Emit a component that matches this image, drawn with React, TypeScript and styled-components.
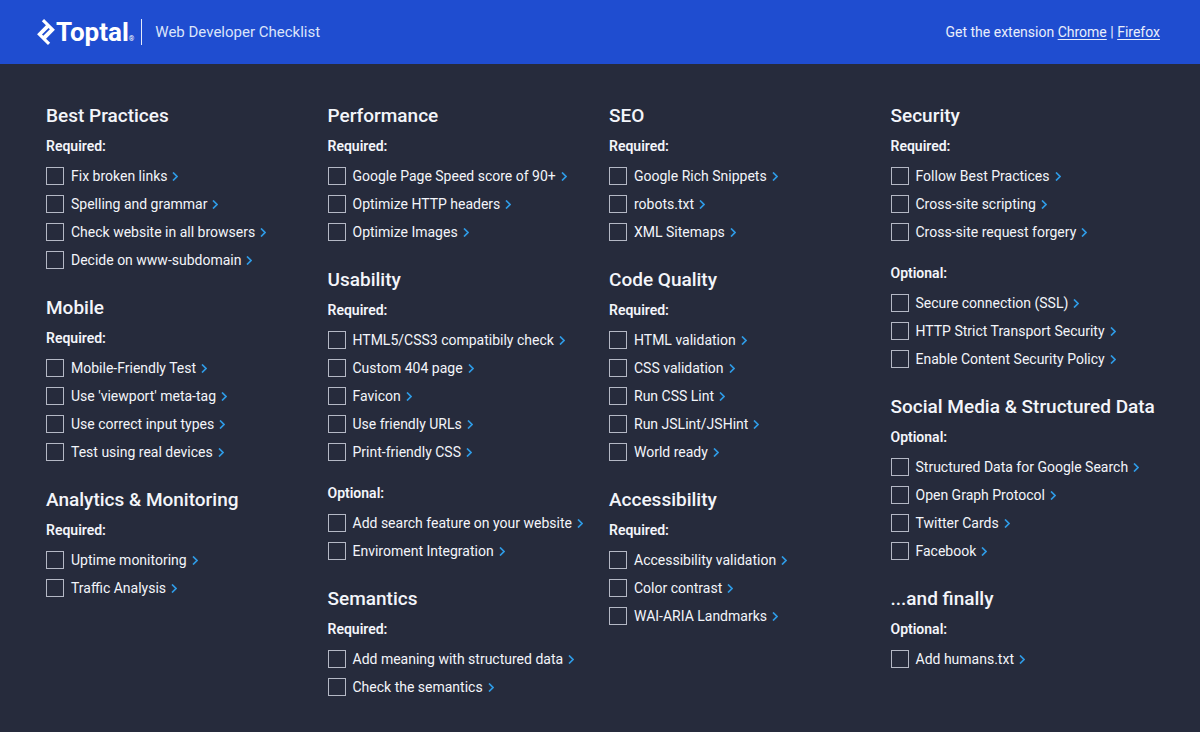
import React from "react";
import styled, { createGlobalStyle } from "styled-components";
import { SiToptal } from "react-icons/si";

const GlobalStyle = createGlobalStyle`
  *, *::before, *::after { box-sizing: border-box; }
  body {
    margin: 0;
    background: #262b3c;
    color: #f3f5fa;
    font-family: Roboto, "Liberation Sans", sans-serif;
    font-size: 14px;
  }
`;

const Header = styled.header`
  display: flex;
  align-items: center;
  height: 64px;
  padding: 0 40px 0 33px;
  background: #1f4dd0;
`;

const Brand = styled.a`
  display: flex;
  align-items: center;
  height: 26px;
  padding-right: 7px;
  border-right: 1px solid #e4eafa;
  color: #ffffff;
  text-decoration: none;
`;

const BrandName = styled.span`
  margin-left: -3px;
  font-size: 26px;
  font-weight: 700;
  line-height: 26px;
`;

const Registered = styled.span`
  align-self: flex-end;
  font-size: 7px;
  line-height: 12px;
`;

const Title = styled.h1`
  margin: 0 auto 0 13px;
  font-size: 15px;
  font-weight: 400;
  color: #dbe4fa;
`;

const Extension = styled.p`
  margin: 0;
  color: #e9eefb;
`;

const ExtensionLink = styled.a`
  color: inherit;
  text-underline-offset: 2px;
`;

const Board = styled.main`
  display: grid;
  grid-template-columns: repeat(4, minmax(0, 1fr));
  padding: 38px 28px 30px 46px;
`;

const Section = styled.section`
  margin-bottom: 20px;
`;

const Heading = styled.h2`
  margin: 0;
  font-size: 19px;
  font-weight: 500;
  line-height: 28px;
  white-space: nowrap;
`;

const Group = styled.fieldset`
  min-width: 0;
  margin: 0;
  padding: 0;
  border: 0;

  & + & { margin-top: 11px; }
`;

const Legend = styled.legend`
  padding: 0;
  font-size: 14px;
  font-weight: 600;
  line-height: 32px;
`;

const Items = styled.ul`
  margin: 0;
  padding: 0;
  list-style: none;
`;

const Item = styled.li`
  display: flex;
  align-items: center;
  height: 28px;
  white-space: nowrap;
`;

const Label = styled.label`
  display: flex;
  align-items: center;
  gap: 7px;
`;

const Box = styled.input`
  appearance: none;
  width: 18px;
  height: 18px;
  margin: 0;
  border: 1px solid #b4b8c5;

  &:checked { background: #2f9be6; }
`;

const More = styled.a`
  display: flex;
  padding: 4px 5px;
  color: #2f9be6;
`;

type GroupData = { kind: "Required" | "Optional"; items: string[] };
type SectionData = { title: string; groups: GroupData[] };

const required = (...items: string[]): GroupData => ({ kind: "Required", items });
const optional = (...items: string[]): GroupData => ({ kind: "Optional", items });

const columns: SectionData[][] = [
  [
    { title: "Best Practices", groups: [required("Fix broken links", "Spelling and grammar", "Check website in all browsers", "Decide on www-subdomain")] },
    { title: "Mobile", groups: [required("Mobile-Friendly Test", "Use 'viewport' meta-tag", "Use correct input types", "Test using real devices")] },
    { title: "Analytics & Monitoring", groups: [required("Uptime monitoring", "Traffic Analysis")] },
  ],
  [
    { title: "Performance", groups: [required("Google Page Speed score of 90+", "Optimize HTTP headers", "Optimize Images")] },
    {
      title: "Usability",
      groups: [
        required("HTML5/CSS3 compatibily check", "Custom 404 page", "Favicon", "Use friendly URLs", "Print-friendly CSS"),
        optional("Add search feature on your website", "Enviroment Integration"),
      ],
    },
    { title: "Semantics", groups: [required("Add meaning with structured data", "Check the semantics")] },
  ],
  [
    { title: "SEO", groups: [required("Google Rich Snippets", "robots.txt", "XML Sitemaps")] },
    { title: "Code Quality", groups: [required("HTML validation", "CSS validation", "Run CSS Lint", "Run JSLint/JSHint", "World ready")] },
    { title: "Accessibility", groups: [required("Accessibility validation", "Color contrast", "WAI-ARIA Landmarks")] },
  ],
  [
    {
      title: "Security",
      groups: [
        required("Follow Best Practices", "Cross-site scripting", "Cross-site request forgery"),
        optional("Secure connection (SSL)", "HTTP Strict Transport Security", "Enable Content Security Policy"),
      ],
    },
    { title: "Social Media & Structured Data", groups: [optional("Structured Data for Google Search", "Open Graph Protocol", "Twitter Cards", "Facebook")] },
    { title: "...and finally", groups: [optional("Add humans.txt")] },
  ],
];

const Chevron = () => (
  <svg width="6" height="9" viewBox="0 0 6 9" fill="none" stroke="currentColor" strokeWidth="1.7" aria-hidden="true">
    <path d="M1 .5 5 4.500 1 8.500" />
  </svg>
);

const ChecklistItem = ({ text }: { text: string }) => (
  <Item>
    <Label>
      <Box type="checkbox" />
      {text}
    </Label>
    <More href="#" aria-label={`More about ${text}`}>
      <Chevron />
    </More>
  </Item>
);

export default function App() {
  return (
    <>
      <GlobalStyle />
      <Header>
        <Brand href="#">
          <SiToptal size={26} aria-hidden="true" />
          <BrandName>Toptal</BrandName>
          <Registered>®</Registered>
        </Brand>
        <Title>Web Developer Checklist</Title>
        <Extension>
          Get the extension <ExtensionLink href="#">Chrome</ExtensionLink> | <ExtensionLink href="#">Firefox</ExtensionLink>
        </Extension>
      </Header>
      <Board>
        {columns.map((sections, i) => (
          <div key={i}>
            {sections.map(({ title, groups }) => (
              <Section key={title}>
                <Heading>{title}</Heading>
                {groups.map(({ kind, items }) => (
                  <Group key={kind}>
                    <Legend>{kind}:</Legend>
                    <Items>
                      {items.map((text) => (
                        <ChecklistItem key={text} text={text} />
                      ))}
                    </Items>
                  </Group>
                ))}
              </Section>
            ))}
          </div>
        ))}
      </Board>
    </>
  );
}
